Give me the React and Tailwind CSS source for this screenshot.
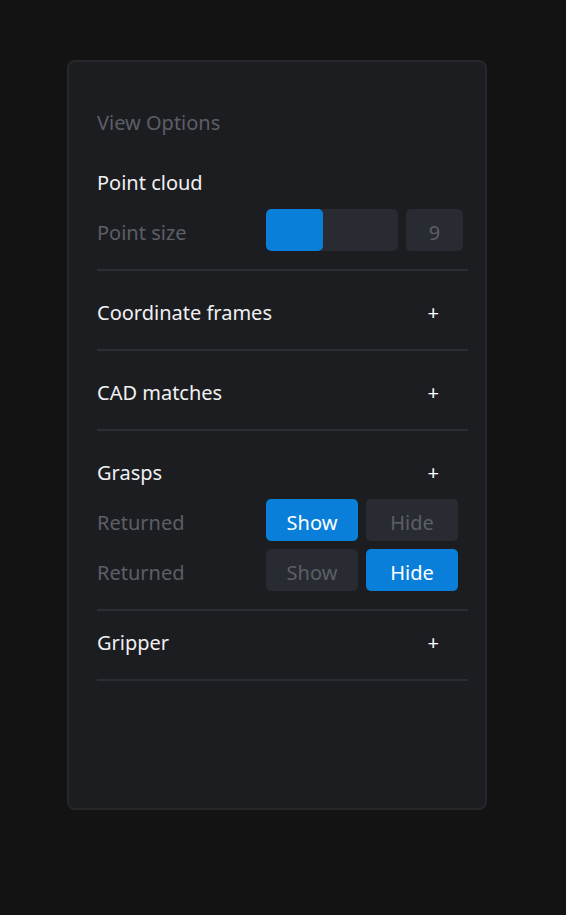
import React, { useState } from "react";

const font = { fontFamily: '"Noto Sans", "Open Sans", sans-serif' };

function Toggle({ value, onChange }) {
    return (
        <div className="flex gap-2">
            <button
                onClick={() => onChange(true)}
                className={`w-[92px] h-[42px] rounded-[5px] text-[20px] leading-[27px] pt-[5px] ${value ? "bg-[#0a7fd9] text-white" : "bg-[#282b32] text-[#5c5f66]"}`}
            >
                Show
            </button>
            <button
                onClick={() => onChange(false)}
                className={`w-[92px] h-[42px] rounded-[5px] text-[20px] leading-[27px] pt-[5px] ${!value ? "bg-[#0a7fd9] text-white" : "bg-[#282b32] text-[#5c5f66]"}`}
            >
                Hide
            </button>
        </div>
    );
}

function Section({ title, children, top = "pt-[28px]", first }) {
    return (
        <div className={`border-b-2 border-[#2b2e34] ${top} ${children ? "pb-[18px]" : "pb-[23px]"}`}>
            <div className="flex items-center justify-between h-[27px]">
                <span className="text-[20px] leading-[27px] text-[#f0f0f2]">{title}</span>
                {!first && <span className="text-[20px] leading-[27px] text-white mr-[29px]">+</span>}
            </div>
            {children && <div className="mt-[13px] flex flex-col gap-2">{children}</div>}
        </div>
    );
}

function Row({ label, children }) {
    return (
        <div className="flex items-start">
            <span className="w-[169px] pt-[10px] text-[20px] leading-[27px] text-[#5c5f66]">{label}</span>
            {children}
        </div>
    );
}

export default function App() {
    const [pointSize] = useState(9);
    const [grasp1, setGrasp1] = useState(true);
    const [grasp2, setGrasp2] = useState(false);

    return (
        <div className="min-h-[915px] bg-[#131313] pt-[60px] pl-[67px]" style={font}>
            <div className="w-[420px] h-[750px] bg-[#1c1d21] border-2 border-[#25272b] rounded-[8px] pl-[28px] pr-[17px] pt-[47px]">
                <div className="text-[20px] text-[#5c5f66] leading-[27px]">View Options</div>

                <div className="mt-[33px]">
                    <Section title="Point cloud" top="pt-0" first>
                        <Row label="Point size">
                            <div className="w-[132px] h-[42px] rounded-[5px] bg-[#282b32] overflow-hidden">
                                <div className="w-[57px] h-full bg-[#0a7fd9] rounded-[5px]" />
                            </div>
                            <div className="ml-2 w-[57px] h-[42px] rounded-[5px] bg-[#282b32] text-center pt-[10px] text-[20px] leading-[27px] text-[#5c5f66]">
                                {pointSize}
                            </div>
                        </Row>
                    </Section>
                    <Section title="Coordinate frames" />
                    <Section title="CAD matches" />
                    <Section title="Grasps">
                        <Row label="Returned">
                            <Toggle value={grasp1} onChange={setGrasp1} />
                        </Row>
                        <Row label="Returned">
                            <Toggle value={grasp2} onChange={setGrasp2} />
                        </Row>
                    </Section>
                    <Section title="Gripper" top="pt-[18px]" />
                </div>
            </div>
        </div>
    );
}
